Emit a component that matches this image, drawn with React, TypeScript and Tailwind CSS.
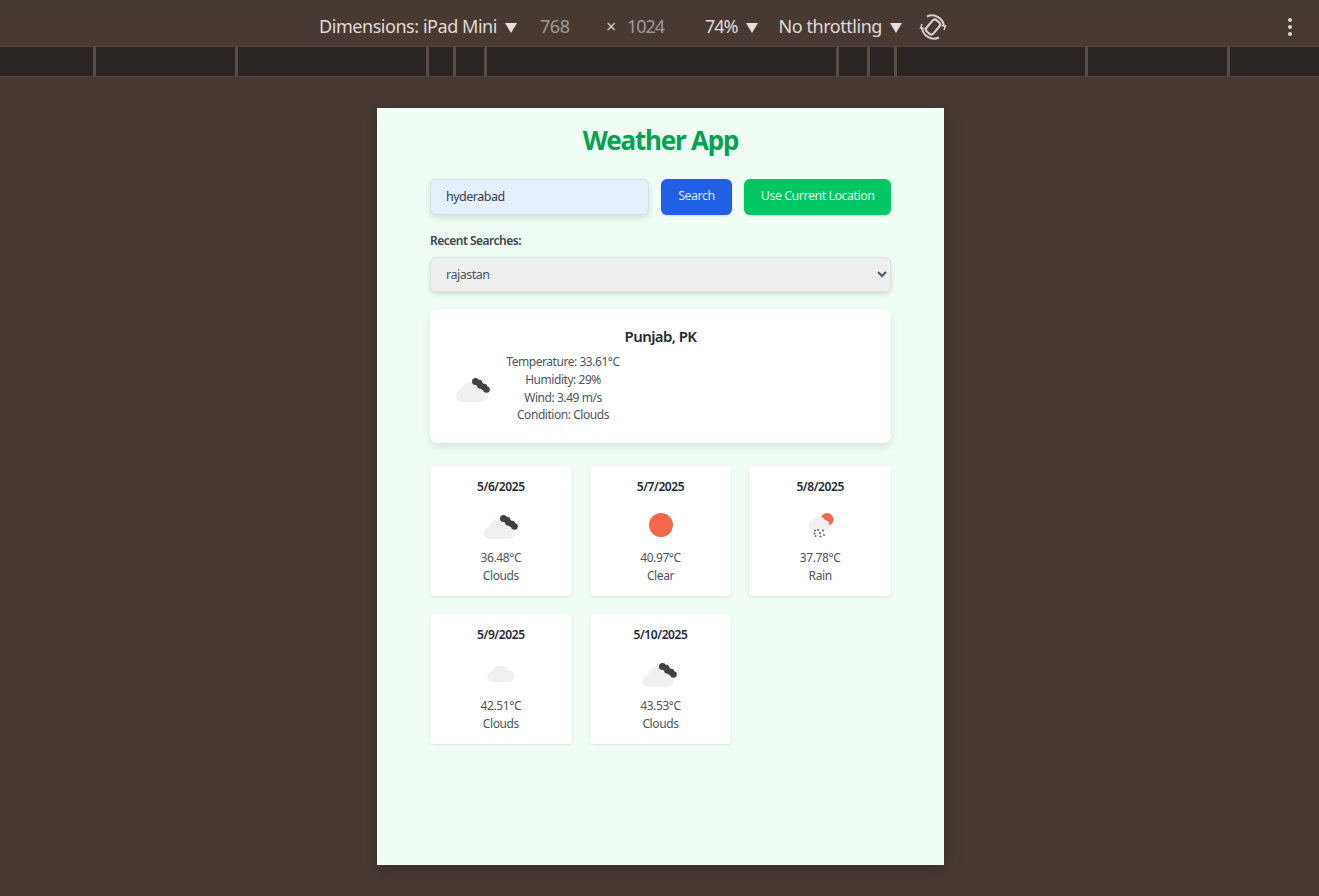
import React from "react";

function DarkClouds({ className }: { className: string }) {
  return (
    <svg viewBox="0 0 36 28" className={className}>
      <path d="M7 27a6 6 0 0 1-.5-12A9.500 9.500 0 0 1 24.500 12.500 7.500 7.500 0 0 1 27 27Z" fill="#f0f0f0" />
      <g fill="#404040">
        <circle cx="20.500" cy="6.500" r="3.500" />
        <circle cx="24" cy="8" r="3.300" />
        <circle cx="25.500" cy="10.500" r="3.300" />
        <circle cx="29" cy="12" r="3.300" />
        <circle cx="31.500" cy="14.500" r="3.300" />
      </g>
    </svg>
  );
}

function RainSun({ className }: { className: string }) {
  return (
    <svg viewBox="0 0 28 28" className={className}>
      <circle cx="21" cy="7.500" r="6.500" fill="#f4694c" />
      <path d="M7 18a4.500 4.500 0 0 1-.5-9A7 7 0 0 1 19 8 5 5 0 0 1 18 18Z" fill="#f0f0f0" />
      <g fill="#6b6b6b">
        <circle cx="9" cy="18.500" r="1.100" />
        <circle cx="12" cy="18" r="1.100" />
        <circle cx="17" cy="18.500" r="1.100" />
        <circle cx="8.500" cy="21.500" r="1.100" />
        <circle cx="14" cy="21" r="1.100" />
        <circle cx="9.500" cy="24" r="1" />
        <circle cx="14.500" cy="24.500" r="1.100" />
        <circle cx="18" cy="23" r=".9" />
      </g>
    </svg>
  );
}

type Kind = "clouds" | "clear" | "rain" | "plain";

function Weather({ kind }: { kind: Kind }) {
  if (kind === "clouds") return <DarkClouds className="h-[28px] w-[36px]" />;
  if (kind === "clear") return <div className="mb-[2px] ml-[1px] size-6 rounded-full bg-[#f4694c]" />;
  if (kind === "rain") return <RainSun className="h-[28px] w-[28px]" />;
  return (
    <svg viewBox="0 0 36 28" className="h-[28px] w-[36px]">
      <path d="M10 22a5.500 5.500 0 0 1-.5-11A8.500 8.500 0 0 1 25 10a6 6 0 0 1 1 12Z" fill="#f0f0f0" />
    </svg>
  );
}

const forecast: { date: string; temp: string; cond: string; kind: Kind }[] = [
  { date: "5/6/2025", temp: "36.48°C", cond: "Clouds", kind: "clouds" },
  { date: "5/7/2025", temp: "40.97°C", cond: "Clear", kind: "clear" },
  { date: "5/8/2025", temp: "37.78°C", cond: "Rain", kind: "rain" },
  { date: "5/9/2025", temp: "42.51°C", cond: "Clouds", kind: "plain" },
  { date: "5/10/2025", temp: "43.53°C", cond: "Clouds", kind: "clouds" },
];

const segments = [96, 142, 191, 27, 31, 352, 31, 27, 191, 142, 89];

function Caret() {
  return <span className="ml-2 mt-[2px] h-0 w-0 border-x-[6px] border-t-[10px] border-x-transparent border-t-[#e6e1dc]" />;
}

export default function App() {
  return (
    <div className="flex h-[896px] w-[1319px] flex-col overflow-hidden bg-[#483a33] font-['Noto_Sans',sans-serif]">
      <div className="mt-[5px] h-[2px] shrink-0 bg-[#423a38]" />
      <div className="flex h-[39px] shrink-0 items-center pl-[319px] text-[18px] tracking-[-0.45px] text-[#e0dbd6]">
        <span>Dimensions: iPad Mini</span>
        <Caret />
        <span className="ml-[23px] w-[66px] text-[#a09a95]">768</span>
        <span className="w-[21px] text-[#d0cac5]">×</span>
        <span className="w-[78px] tracking-[-1px] text-[#a09a95]">1024</span>
        <span className="tracking-[-1px]">74%</span>
        <Caret />
        <span className="ml-[21px]">No throttling</span>
        <Caret />
        <svg viewBox="0 0 28 28" className="ml-[17px] size-7" fill="none" stroke="#d6d1cc">
          <rect x="9.500" y="6.500" width="9" height="15" rx="3" strokeWidth="2.200" transform="rotate(40 14 14)" />
          <path d="M8 3.500a12 12 0 0 1 17 10" strokeWidth="2" />
          <path d="M20 24.500a12 12 0 0 1-17-10" strokeWidth="2" />
          <path d="M3 11l-1.500 4 4 .5M25 17l1.500-4-4-.5" strokeWidth="1.500" />
        </svg>
        <div className="ml-auto mr-[27px] flex flex-col gap-[3px]">
          <span className="size-1 rounded-full bg-[#dcd7d2]" />
          <span className="size-1 rounded-full bg-[#dcd7d2]" />
          <span className="size-1 rounded-full bg-[#dcd7d2]" />
        </div>
      </div>
      <div className="flex h-[31px] shrink-0 border-y border-[#55463e] bg-[#2a2522]">
        {segments.map((w, i) => (
          <div key={i} style={{ width: w }} className={i === segments.length - 1 ? "" : "border-r-[3px] border-[#5a4c45]"} />
        ))}
      </div>
      <div className="ml-[377px] mt-[31px] h-[757px] w-[567px] bg-[#effdf4] px-[53px] pt-[13px] shadow-[0_4px_16px_rgba(0,0,0,0.25)]">
        <h1 className="text-center text-[26px] font-bold leading-[38px] tracking-[-1.2px] text-[#03a24e]">Weather App</h1>
        <div className="mt-[20px] flex h-[36px] gap-3 text-[12.5px] tracking-[-0.5px]">
          <input
            readOnly
            value="hyderabad"
            className="h-full w-[219px] rounded-md border border-[#d5dfe9] bg-[#e6f0fd] px-[15px] pb-[1px] text-[#364152] shadow-[0_3px_6px_rgba(0,0,0,0.12)] outline-none"
          />
          <button className="w-[72px] rounded-md bg-[#2160e6] pb-[1px] text-[#dbe5fb] shadow-sm">Search</button>
          <button className="w-[147px] rounded-md bg-[#00c764] pb-[1px] text-[#def5e8] shadow-sm">Use Current Location</button>
        </div>
        <div className="mt-[17px] text-[12px] font-semibold leading-[17px] tracking-[-0.5px] text-[#3b4553]">Recent Searches:</div>
        <select className="mt-[8px] h-[35px] w-full rounded-md border border-[#dfe3e3] bg-[#efefef] px-[11px] pb-[1px] text-[12.5px] tracking-[-0.5px] text-[#4b5563] shadow-[0_2px_4px_rgba(0,0,0,0.14)] outline-none">
          <option>rajastan</option>
        </select>
        <div className="mt-[17px] h-[134px] rounded-lg bg-white px-[20px] pt-[17px] shadow-[0_4px_8px_rgba(0,0,0,0.1)]">
          <h2 className="text-center text-[15px] font-semibold leading-[21px] tracking-[-0.6px] text-[#1f2937]">Punjab, PK</h2>
          <div className="mt-[6px] flex items-center">
            <DarkClouds className="ml-[5px] h-[28px] w-[36px]" />
            <div className="ml-[14px] w-[116px] whitespace-nowrap text-center text-[12px] leading-[17.800px] tracking-[-0.45px] text-[#4b5563]">
              <div>Temperature: 33.61°C</div>
              <div>Humidity: 29%</div>
              <div>Wind: 3.49 m/s</div>
              <div>Condition: Clouds</div>
            </div>
          </div>
        </div>
        <div className="mt-[23px] grid grid-cols-3 gap-[18px] tracking-[-0.4px]">
          {forecast.map((f) => (
            <div key={f.date} className="flex h-[130px] flex-col items-center rounded bg-white pt-[12px] shadow-[0_1px_3px_rgba(0,0,0,0.1)]">
              <div className="text-[12px] font-semibold leading-[17px] text-[#1f2937]">{f.date}</div>
              <div className="mt-[17px] flex h-[28px] items-center">
                <Weather kind={f.kind} />
              </div>
              <div className="mt-[9px] text-[12px] leading-[18px] text-[#4b5563]">{f.temp}</div>
              <div className="text-[12px] leading-[18px] text-[#4b5563]">{f.cond}</div>
            </div>
          ))}
        </div>
      </div>
    </div>
  );
}
